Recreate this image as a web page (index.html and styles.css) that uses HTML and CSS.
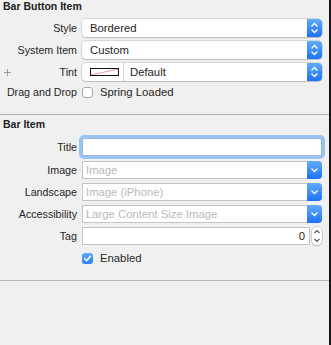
FILE: index.html
```html
<!DOCTYPE html>
<html lang="en">
<head>
  <meta charset="UTF-8">
  <title>Attributes Inspector</title>
  <link rel="stylesheet" href="styles.css">
</head>
<body>
  <div class="inspector">
    <section class="group">
      <h2 class="group-title">Bar Button Item</h2>
      <div class="form">
        <span class="field-label">Style</span>
        <div class="popup">
          <span class="popup-value">Bordered</span>
          <span class="popup-arrows">
            <svg width="15" height="18" viewBox="0 0 15 18"><path d="M4.5 7.5 L7.5 4.5 L10.5 7.5 M4.5 10.5 L7.5 13.5 L10.5 10.5" /></svg>
          </span>
        </div>

        <span class="field-label">System Item</span>
        <div class="popup">
          <span class="popup-value">Custom</span>
          <span class="popup-arrows">
            <svg width="15" height="18" viewBox="0 0 15 18"><path d="M4.5 7.5 L7.5 4.5 L10.5 7.5 M4.5 10.5 L7.5 13.5 L10.5 10.5" /></svg>
          </span>
        </div>

        <span class="field-label field-label--add">
          <svg class="add-icon" width="7" height="7" viewBox="0 0 7 7"><path d="M3.5 0 V7 M0 3.5 H7" /></svg>
          <span>Tint</span>
        </span>
        <div class="popup">
          <span class="color-well">
            <svg width="27" height="6" viewBox="0 0 27 6" preserveAspectRatio="none"><path d="M0 6 L27 0" /></svg>
          </span>
          <span class="popup-value popup-value--divided">Default</span>
          <span class="popup-arrows">
            <svg width="15" height="18" viewBox="0 0 15 18"><path d="M4.5 7.5 L7.5 4.5 L10.5 7.5 M4.5 10.5 L7.5 13.5 L10.5 10.5" /></svg>
          </span>
        </div>

        <span class="field-label field-label--short">Drag and Drop</span>
        <label class="check-row">
          <span class="checkbox"></span>
          <span>Spring Loaded</span>
        </label>
      </div>
    </section>

    <section class="group">
      <h2 class="group-title">Bar Item</h2>
      <div class="form">
        <span class="field-label">Title</span>
        <div class="textfield textfield--focused"></div>

        <span class="field-label">Image</span>
        <div class="combo">
          <span class="combo-value">Image</span>
          <span class="combo-arrow">
            <svg width="15" height="18" viewBox="0 0 15 18"><path d="M4.5 7.5 L7.5 10.5 L10.5 7.5" /></svg>
          </span>
        </div>

        <span class="field-label">Landscape</span>
        <div class="combo">
          <span class="combo-value">Image (iPhone)</span>
          <span class="combo-arrow">
            <svg width="15" height="18" viewBox="0 0 15 18"><path d="M4.5 7.5 L7.5 10.5 L10.5 7.5" /></svg>
          </span>
        </div>

        <span class="field-label">Accessibility</span>
        <div class="combo">
          <span class="combo-value">Large Content Size Image</span>
          <span class="combo-arrow">
            <svg width="15" height="18" viewBox="0 0 15 18"><path d="M4.5 7.5 L7.5 10.5 L10.5 7.5" /></svg>
          </span>
        </div>

        <span class="field-label">Tag</span>
        <div class="number-row">
          <div class="textfield textfield--number">0</div>
          <span class="stepper">
            <svg width="10" height="18" viewBox="0 0 10 18"><path d="M2.5 6 L5 3.5 L7.5 6 M2.5 12 L5 14.5 L7.5 12" /></svg>
          </span>
        </div>

        <span class="field-label field-label--short"></span>
        <label class="check-row check-row--spaced">
          <span class="checkbox checkbox--checked">
            <svg width="11" height="11" viewBox="0 0 11 11"><path d="M2.6 5.6 L4.6 7.8 L8.4 3.2" /></svg>
          </span>
          <span>Enabled</span>
        </label>
      </div>
    </section>
  </div>
</body>
</html>
```

FILE: styles.css
```css
/* Base */
:root {
  --panel-bg: #f0f0f0;
  --text-color: #262626;
  --placeholder: #b9b9b9;
  --line-color: #b4b4b4;
  --field-border: #c4c4c4;
  --blue-top: #62abfb;
  --blue-bottom: #1b72f5;
  --row-height: 18px;
}

* {
  margin: 0;
  padding: 0;
  box-sizing: border-box;
}

body {
  background-color: #151515;
  font-family: 'Liberation Sans', Arial, sans-serif;
  font-size: 11px;
  color: var(--text-color);
}

/* Panel */
.inspector {
  width: 329px;
  min-height: 100vh;
  background-color: var(--panel-bg);
}

.group {
  padding-bottom: 15px;
  border-bottom: 1px solid var(--line-color);
}

.group + .group {
  padding-top: 3px;
}

.group-title {
  font-size: 10.5px;
  font-weight: 700;
  line-height: 13px;
  padding-left: 3px;
  color: #222;
  margin-bottom: 6px;
}

.group + .group .group-title {
  margin-bottom: 7px;
}

.form {
  display: grid;
  grid-template-columns: 77px 1fr;
  column-gap: 5px;
  row-gap: 4px;
  padding-right: 7px;
}

.field-label {
  display: flex;
  align-items: center;
  justify-content: flex-end;
  height: var(--row-height);
  font-size: 10.7px;
  white-space: nowrap;
}

.field-label--short {
  height: 14px;
}

.field-label--add {
  justify-content: space-between;
  padding-left: 4px;
}

.add-icon path {
  stroke: #9c9c9c;
  stroke-width: 1;
  fill: none;
}

/* Pop-up buttons */
.popup {
  display: flex;
  align-items: center;
  height: var(--row-height);
  background-color: #fff;
  border-radius: 4px;
  box-shadow: 0 0 0 0.5px rgba(0, 0, 0, 0.22), 0 1px 1px rgba(0, 0, 0, 0.12);
}

.popup-value {
  flex: 1;
  padding-left: 8px;
  font-size: 11.3px;
  color: #1e1e1e;
}

.popup-value--divided {
  align-self: stretch;
  display: flex;
  align-items: center;
  margin-left: 4px;
  padding-left: 6px;
  border-left: 1px solid #d6d6d6;
}

.popup-arrows,
.combo-arrow {
  width: 15px;
  height: 100%;
  display: flex;
  background: linear-gradient(to bottom, var(--blue-top), var(--blue-bottom));
  border-radius: 0 4px 4px 0;
}

.popup-arrows path,
.combo-arrow path {
  stroke: #fff;
  stroke-width: 1.3;
  fill: none;
}

.color-well {
  display: flex;
  width: 29px;
  height: 8px;
  margin-left: 8px;
  border: 1px solid #111;
  background-color: #fff;
}

.color-well path {
  stroke: #ec7f88;
  stroke-width: 0.8;
  fill: none;
}

/* Combo boxes */
.combo {
  display: flex;
  align-items: center;
  height: var(--row-height);
  background-color: #fff;
  border: 1px solid var(--field-border);
  border-right: none;
  border-radius: 1px 4px 4px 1px;
}

.combo-value {
  flex: 1;
  padding-left: 3px;
  font-size: 11.3px;
  color: var(--placeholder);
}

.combo-arrow {
  height: calc(100% + 2px);
  margin: -1px 0;
}

/* Text fields */
.textfield {
  height: var(--row-height);
  background-color: #fff;
  border: 1px solid var(--field-border);
}

.textfield--focused {
  border-color: #98b6da;
  border-radius: 2px;
  box-shadow: 0 0 0 3px #9ac4f4;
  margin-bottom: 1px;
}

.number-row {
  display: flex;
  align-items: center;
  gap: 2px;
}

.textfield--number {
  flex: 1;
  text-align: right;
  padding-right: 4px;
  font-size: 11.3px;
  line-height: 16px;
  color: #1e1e1e;
}

.stepper {
  display: flex;
  width: 10px;
  height: var(--row-height);
  background-color: #fff;
  border-radius: 4px;
  box-shadow: 0 0 0 0.5px rgba(0, 0, 0, 0.3), 0 1px 1px rgba(0, 0, 0, 0.1);
}

.stepper path {
  stroke: #555;
  stroke-width: 1.1;
  fill: none;
}

/* Checkboxes */
.check-row {
  display: flex;
  align-items: center;
  gap: 7px;
  height: 14px;
  font-size: 11.3px;
}

.check-row--spaced {
  margin-top: 2px;
}

.checkbox {
  display: flex;
  width: 11px;
  height: 11px;
  background-color: #fff;
  border: 1px solid #a9a9a9;
  border-radius: 3px;
}

.checkbox--checked {
  border: none;
  background: linear-gradient(to bottom, #5ea8fb, #2a7ef6);
}

.checkbox--checked path {
  stroke: #fff;
  stroke-width: 1.5;
  fill: none;
  stroke-linecap: round;
  stroke-linejoin: round;
}
```
